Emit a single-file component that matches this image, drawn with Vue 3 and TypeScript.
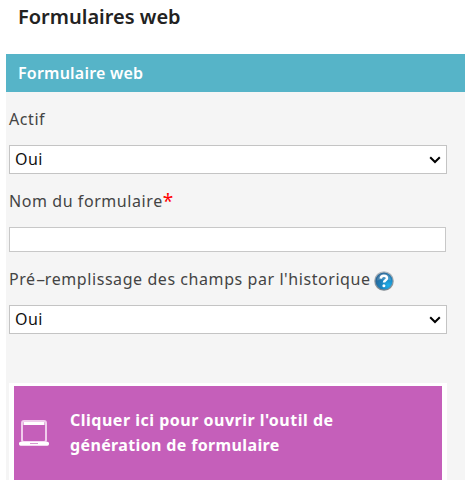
<script setup lang="ts">
import { ref } from 'vue'

const active = ref<string>('Oui')
const prefill = ref<string>('Oui')
const formName = ref<string>('')
</script>

<template>
  <main class="page">
    <h1 class="title">Formulaires web</h1>
    <section class="panel">
      <h2 class="panel-title">Formulaire web</h2>
      <form class="form" @submit.prevent>
        <label class="label" for="active">Actif</label>
        <div class="select">
          <select id="active" v-model="active">
            <option>Oui</option>
            <option>Non</option>
          </select>
          <svg class="chevron" viewBox="0 0 12 8"><path d="M1.2 1.2 6 6l4.8-4.8" /></svg>
        </div>

        <label class="label name-label" for="name">Nom du formulaire<span class="required">*</span></label>
        <input id="name" v-model="formName" class="input" type="text" />

        <label class="label prefill-label" for="prefill">
          <span>Pré<span class="hyphen">-</span>remplissage des champs par l'historique</span>
          <svg class="help" viewBox="0 0 20 20">
            <defs>
              <linearGradient id="rim" x1="0" y1="0" x2="0" y2="1">
                <stop offset="0" stop-color="#b4bcc2" />
                <stop offset="1" stop-color="#7b848b" />
              </linearGradient>
              <radialGradient id="ball" cx=".75" cy=".75" r=".75">
                <stop offset="0" stop-color="#20b0ea" />
                <stop offset=".5" stop-color="#1b86c2" />
                <stop offset="1" stop-color="#28689a" />
              </radialGradient>
            </defs>
            <circle cx="10" cy="10" r="9.8" fill="url(#rim)" />
            <circle cx="10" cy="10" r="8.6" fill="url(#ball)" />
            <path d="M3 9.5a7 7 0 0 1 14 0Q10 7.5 3 9.5Z" fill="#fff" opacity=".16" />
            <path d="M6.7 7.6C6.9 5.5 8.1 4.7 9.8 4.7c2 0 3.2 1 3.2 2.6 0 2-3 2.1-3 4.3" fill="none" stroke="#fff" stroke-width="2.5" />
            <circle cx="9.9" cy="14.7" r="1.5" fill="#fff" />
          </svg>
        </label>
        <div class="select">
          <select id="prefill" v-model="prefill">
            <option>Oui</option>
            <option>Non</option>
          </select>
          <svg class="chevron" viewBox="0 0 12 8"><path d="M1.2 1.2 6 6l4.8-4.8" /></svg>
        </div>

        <button class="builder" type="button">
          <svg class="laptop" viewBox="0 0 30 26">
            <rect x="3" y="1" width="24" height="21" rx="2" fill="none" stroke="#f0cdec" stroke-width="2" />
            <path d="M4.5 3.5h21" stroke="#fff" stroke-width="3" />
            <rect x="0" y="21.7" width="30" height="4" rx="1.6" fill="#fff" />
            <path d="M11 23.5h8" stroke="#d697d0" stroke-width="1" />
          </svg>
          <span class="builder-text">
            <span class="line-one">Cliquer ici pour ouvrir l'outil de</span><br />
            <span class="line-two">génération de formulaire</span>
          </span>
        </button>
      </form>
    </section>
  </main>
</template>

<style>
body {
  background: #fff;
}
</style>

<style scoped>
.page {
  box-sizing: border-box;
  height: 480px;
  padding: 0 4px 0 6px;
  overflow: hidden;
  display: flex;
  flex-direction: column;
  font-family: "Noto Sans", "Open Sans", sans-serif;
  font-size: 16px;
  color: #444;
}
.title {
  box-sizing: border-box;
  height: 54px;
  margin: 0;
  padding: 4px 0 0 12px;
  font-size: 20px;
  line-height: 26px;
  font-weight: 600;
  color: #222;
  white-space: nowrap;
}
.panel {
  flex: 1;
  min-height: 0;
  background: #f5f5f5;
}
.panel-title {
  margin: 0;
  height: 38px;
  padding-left: 12px;
  background: #56b4c8;
  color: #fff;
  font-size: 16px;
  line-height: 38px;
  font-weight: 600;
  letter-spacing: 0.22px;
}
.form {
  display: flex;
  flex-direction: column;
  padding: 14px 18px 0 3px;
}
.label {
  display: flex;
  align-items: center;
  height: 26px;
  letter-spacing: 0.57px;
  white-space: nowrap;
}
.select {
  position: relative;
  display: flex;
  height: 29px;
  margin-top: 13px;
}
.select select {
  appearance: none;
  box-sizing: border-box;
  width: 100%;
  height: 29px;
  margin: 0;
  padding: 0 24px 2px 5px;
  border: 1px solid #c4c4c4;
  border-radius: 0;
  background: #fff;
  color: #111;
  font: inherit;
  letter-spacing: 0.4px;
}
.chevron {
  position: absolute;
  right: 6px;
  top: 11px;
  width: 12px;
  height: 8px;
  fill: none;
  stroke: #000;
  stroke-width: 2;
  pointer-events: none;
}
.name-label {
  margin-top: 14px;
}
.required {
  color: #f00;
  font-size: 19px;
  line-height: 20px;
}
.input {
  box-sizing: border-box;
  height: 25px;
  margin: 13px 1px 0 0;
  padding: 0 6px;
  border: 1px solid #c8c8c8;
  background: #fff;
  font: inherit;
}
.prefill-label {
  margin-top: 14px;
}
.hyphen {
  display: inline-block;
  margin: 0 2px;
  letter-spacing: 0;
  transform: scaleX(1.9);
}
.help {
  width: 20px;
  height: 20px;
  margin: 3px 0 0 3px;
}
.builder {
  display: flex;
  align-items: flex-start;
  box-sizing: border-box;
  height: 110px;
  margin: 49px 0 0;
  padding: 22px 0 0 5px;
  border: solid #fff;
  border-width: 3px 5px;
  border-radius: 0;
  background: #c55fba;
  color: #fff;
  font: 700 16px/25px "Noto Sans", "Open Sans", sans-serif;
  text-align: left;
  white-space: nowrap;
}
.line-one {
  letter-spacing: 0.5px;
}
.line-two {
  letter-spacing: 0.36px;
}
.laptop {
  flex: none;
  width: 30px;
  height: 26px;
  margin: 12px 21px 0 0;
}
</style>
